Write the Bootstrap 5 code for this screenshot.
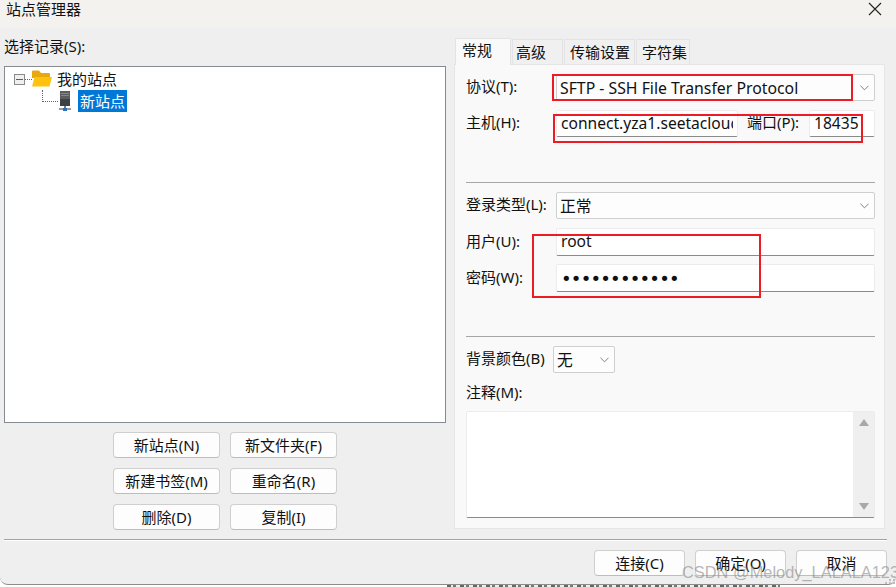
<!DOCTYPE html>
<html lang="zh">
<head>
<meta charset="utf-8">
<title>站点管理器</title>
<link rel="stylesheet" href="https://cdn.jsdelivr.net/npm/bootstrap@5.3.0/dist/css/bootstrap.min.css">
<style>
html,body{margin:0;height:587px;overflow:hidden;background:#fff}
body{font-family:"Noto Sans","Noto Sans CJK SC",sans-serif;font-size:15px;color:#111;line-height:20px;position:relative}
.dlg{position:relative;height:585px;width:896px;background:#efefef;border-bottom:1px solid #8d8d8d;border-radius:0 0 8px 8px;display:flex;flex-direction:column;overflow:hidden}
.ttl{height:28px;flex:none;background:#f3f2ee;display:flex;align-items:center;justify-content:space-between;padding:0 14px 10px 6px}
.mainrow{flex:none;height:511px;display:flex;padding-left:4px}
.leftc{width:442px;flex:none;display:flex;flex-direction:column}
.sel-lbl{height:38px;display:flex;align-items:center;padding-bottom:2px}
.treebox{height:357px;background:#fff;border:1px solid #868a91;padding:1px 0 0 9px}
.trow{display:flex;align-items:center;height:22px;position:relative}
.expander{width:11px;height:11px;border:1px solid #8a8a8a;background:#f0f0f0;display:flex;align-items:center;justify-content:center;flex:none}
.expander span{display:block;width:7px;height:1px;background:#3d5fa8}
.dots{width:7px;border-top:1px dotted #666;flex:none}
.vdots{position:absolute;left:28px;top:0;height:12px;border-left:1px dotted #666}
.hdots{width:16px;margin-left:28px;border-top:1px dotted #666;flex:none}
.foldername{margin-left:5px}
.picked{background:#0078d7;color:#fff;padding:0 2px;margin-left:6px;height:22px;line-height:22px}
.btngrid{display:grid;grid-template-columns:107px 107px;gap:10px;justify-content:center;margin-top:9px}
.wbtn{height:26px;padding:0;background:#fdfdfd;border:1px solid #cfcfcf;border-bottom-color:#bdbdbd;border-radius:4px;font-size:15px;line-height:24px;color:#111}
.wbtn:hover{background:#fdfdfd;border-color:#cfcfcf;color:#111}
.rightc{width:431px;margin-left:8px;flex:none;display:flex;flex-direction:column;padding-top:10px}
.tabbar{height:26px;display:flex;align-items:flex-end;padding-left:1px;border:0;flex-wrap:nowrap}
.tabbar .nav-link{height:25px;margin:0 1px 0 0;padding:0 0 0 5px;background:#f0f0f0;border:1px solid #e3e3e3;border-bottom:0;border-radius:0;color:#111;font-size:15px;line-height:25px;text-align:left}
.tabbar .nav-link.active{height:27px;margin-bottom:-1px;background:#f9f9f9;border-color:#e3e3e3;color:#111;position:relative;z-index:1;line-height:22px;padding:0 0 5px 6px}
.tabbar .tabw1{width:56px}
.tabbar .tabw2{width:51px;padding-left:3px}
.tabbar .tabw3{width:71px}
.tabbar .tabw4{width:54px}
.panel{height:465px;background:#f9f9f9;border:1px solid #e5e5e5;padding:9px 9px 0 11px;display:flex;flex-direction:column}
.frow{display:flex;align-items:center;height:27px;flex:none}
.frow-tall{height:28px}
.flbl{width:90px;flex:none;padding-bottom:3px}
.winsel{height:27px;padding:1px 0 0 3px;font-size:15.8px;line-height:25px;border:1px solid #cfcfcf;border-radius:2px;background-color:#fdfdfd;color:#111;background-image:url("data:image/svg+xml,%3csvg xmlns='http://www.w3.org/2000/svg' viewBox='0 0 10 6'%3e%3cpath fill='none' stroke='%23666' stroke-width='.9' d='M.5.5 5 5 9.500.5'/%3e%3c/svg%3e");background-size:9px 6px;background-position:right 5px center}
.winfld{height:100%;padding:0 4px 2px;font-size:15.6px;line-height:24px;border:1px solid #ececec;border-bottom:1px solid #8a8a8a;border-radius:2px;background:#fff;color:#111}
.winfld:focus,.winsel:focus{box-shadow:none;border-color:#cfcfcf}
.divl{height:1px;background:#a6a6a6;flex:none}
.gap45{margin-top:45px}.gap44{margin-top:44px}
.mt9{margin-top:9px}
.portlbl{margin:0 4px 0 9px;flex:none;white-space:nowrap;width:58px;padding-bottom:3px}
.portfld{width:66px;flex:none}
.pwd{font-family:"DejaVu Sans",sans-serif;font-size:18px;letter-spacing:-.8px;padding-bottom:0}
.colorsel{width:62px;margin-left:-3px;flex:none}
.notelbl{margin-top:9px;margin-bottom:1px}
.notebox{height:107px;background:#fff;border:1px solid #ececec;border-bottom:1px solid #8a8a8a;border-radius:2px;display:flex;justify-content:flex-end;margin-top:8px}
.sbar{width:21px;background:#efefef;display:flex;flex-direction:column;justify-content:space-between;align-items:center;padding:7px 0}
.sepl{height:1px;background:#a3a3a3;margin-left:4px;margin-right:9px;box-shadow:0 1px 0 #fff;flex:none}
.foot{display:flex;justify-content:flex-end;gap:10px;padding:10px 9px 0 0}
.foot .wbtn{width:91px}
.redbox{position:absolute;border:2px solid #ed1c24;pointer-events:none;z-index:3}
.rb1{left:552px;top:74px;width:301px;height:27px}
.rb2{left:553px;top:114px;width:310px;height:29px}
.rb3{left:532px;top:234px;width:229px;height:64px}
.wm{position:absolute;left:682px;top:561px;font-family:"Liberation Sans",sans-serif;font-size:16.4px;line-height:22px;color:rgba(135,135,135,.6);white-space:nowrap;z-index:4}
.grip{position:absolute;left:884px;top:576px;z-index:4}
.behind{position:absolute;left:447px;top:585px;width:333px;height:2px;background:repeating-linear-gradient(90deg,#666 0 4px,#eee 4px 6px,#777 6px 9px,#eee 9px 13px)}
</style>
</head>
<body>
<div class="dlg">
  <div class="ttl">
    <span>站点管理器</span>
    <svg width="14" height="14" viewBox="0 0 14 14"><path d="M1 1 13 13M13 1 1 13" stroke="#222" stroke-width="1.1" fill="none"/></svg>
  </div>
  <div class="mainrow">
    <div class="leftc">
      <div class="sel-lbl">选择记录(S):</div>
      <div class="treebox">
        <div class="trow">
          <span class="expander"><span></span></span><span class="dots"></span>
          <svg width="20" height="18" viewBox="0 0 20 18" class="flex-none"><path d="M0 1.500Q0 .5 1 .5H7L9 3H17Q18 3 18 4V8H0Z" fill="#e8a90e"/><path d="M0 16.500 2.500 7H20L17.500 16.500Z" fill="#ffc30f"/></svg>
          <span class="foldername">我的站点</span>
        </div>
        <div class="trow">
          <span class="vdots"></span>
          <span class="hdots"></span>
          <svg width="14" height="21" viewBox="0 0 14 21" class="flex-none"><rect x="2" y="0" width="10" height="15" fill="#5b5e60"/><rect x="3" y="2" width="8" height="1" fill="#4fae4f"/><rect x="3" y="4" width="8" height="1" fill="#4fae4f"/><rect x="2" y="8" width="10" height="7" fill="#3e4143"/><rect x="6" y="15" width="2" height="3" fill="#777"/><rect x="1" y="17" width="12" height="2" fill="#9a9a9a"/><rect x="5" y="17" width="4" height="3" fill="#2f6fc0"/></svg>
          <span class="picked">新站点</span>
        </div>
      </div>
      <div class="btngrid">
        <button type="button" class="btn wbtn">新站点(N)</button>
        <button type="button" class="btn wbtn">新文件夹(F)</button>
        <button type="button" class="btn wbtn">新建书签(M)</button>
        <button type="button" class="btn wbtn">重命名(R)</button>
        <button type="button" class="btn wbtn">删除(D)</button>
        <button type="button" class="btn wbtn">复制(I)</button>
      </div>
    </div>
    <div class="rightc">
      <ul class="nav nav-tabs tabbar">
        <li class="nav-item"><a class="nav-link active tabw1" href="#">常规</a></li>
        <li class="nav-item"><a class="nav-link tabw2" href="#">高级</a></li>
        <li class="nav-item"><a class="nav-link tabw3" href="#">传输设置</a></li>
        <li class="nav-item"><a class="nav-link tabw4" href="#">字符集</a></li>
      </ul>
      <div class="panel">
        <div class="frow"><span class="flbl">协议(T):</span><select class="form-select winsel"><option>SFTP - SSH File Transfer Protocol</option></select></div>
        <div class="frow mt9"><span class="flbl">主机(H):</span><input class="form-control winfld" value="connect.yza1.seetacloud.com"><span class="portlbl">端口(P):</span><input class="form-control winfld portfld" value="18435"></div>
        <div class="divl gap45"></div>
        <div class="frow mt9"><span class="flbl">登录类型(L):</span><select class="form-select winsel"><option>正常</option></select></div>
        <div class="frow frow-tall mt9"><span class="flbl">用户(U):</span><input class="form-control winfld" value="root"></div>
        <div class="frow frow-tall mt-2"><span class="flbl">密码(W):</span><input class="form-control winfld pwd" value="••••••••••••"></div>
        <div class="divl gap44"></div>
        <div class="frow mt9"><span class="flbl">背景颜色(B)</span><select class="form-select winsel colorsel"><option>无</option></select></div>
        <div class="notelbl">注释(M):</div>
        <div class="notebox"><div class="sbar">
          <svg width="10" height="7" viewBox="0 0 10 7"><path d="M5 0 10 7H0Z" fill="#a8a8a8"/></svg>
          <svg width="10" height="7" viewBox="0 0 10 7"><path d="M0 0H10L5 7Z" fill="#a8a8a8"/></svg>
        </div></div>
      </div>
    </div>
  </div>
  <div class="sepl"></div>
  <div class="foot">
    <button type="button" class="btn wbtn">连接(C)</button>
    <button type="button" class="btn wbtn">确定(O)</button>
    <button type="button" class="btn wbtn">取消</button>
  </div>
</div>
<div class="behind"></div>
<div class="redbox rb1"></div>
<div class="redbox rb2"></div>
<div class="redbox rb3"></div>
<div class="wm">CSDN @Melody_LALALA123</div>
<svg class="grip" width="12" height="9" viewBox="0 0 12 9"><path d="M9 0h2v2H9zM5 3h2v2H5zM9 3h2v2H9zM1 6h2v2H1zM5 6h2v2H5zM9 6h2v2H9z" fill="#bdbdbd"/></svg>
</body>
</html>
